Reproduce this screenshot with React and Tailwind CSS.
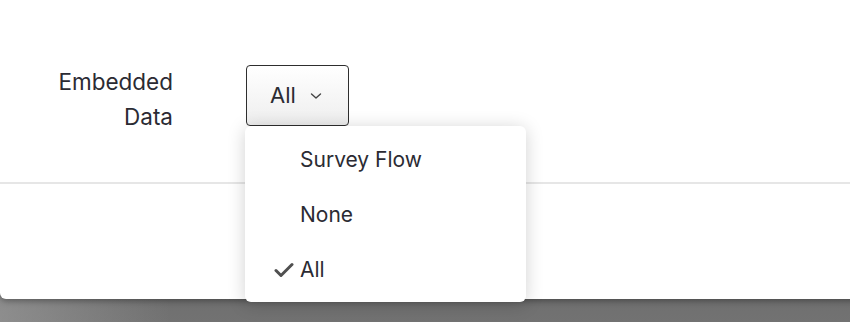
import React from "react";

const font = { fontFamily: "Inter, 'Liberation Sans', sans-serif" };

const Check = () => (
  <svg width="20" height="16" viewBox="0 0 20 16" fill="none">
    <path d="M2 8.5 L7 13.5 L18 2.5" stroke="#505050" strokeWidth="3" strokeLinecap="round" strokeLinejoin="round" />
  </svg>
);

const Chevron = () => (
  <svg width="12" height="8" viewBox="0 0 12 8" fill="none">
    <path d="M1.5 2 L6 6 L10.5 2" stroke="#444" strokeWidth="1.4" strokeLinecap="round" strokeLinejoin="round" />
  </svg>
);

const items = [
  { label: "Survey Flow", checked: false },
  { label: "None", checked: false },
  { label: "All", checked: true },
];

export default function App() {
  return (
    <div
      className="relative w-[850px] h-[322px] overflow-hidden bg-[linear-gradient(to_bottom,#505050,#727272)]"
      style={font}
    >
      <div className="absolute inset-0 bg-[linear-gradient(to_right,rgba(160,160,160,0.6),rgba(160,160,160,0)_20%)]" />
      <div className="relative h-[299px] w-[860px] bg-white rounded-bl-md shadow-[0_2px_6px_rgba(0,0,0,0.35)]">
        <div className="flex items-start pt-[65px] h-[182px]">
          <div className="w-[173px] text-right text-[22.5px] leading-[35px] text-[#2b2b33] -mt-[1px]">
            <div>Embedded</div>
            <div>Data</div>
          </div>
          <button className="ml-[73px] w-[103px] h-[61px] flex items-center gap-[14px] pl-[23px] border border-[#2e2e2e] rounded-[4px] bg-[linear-gradient(to_bottom,#ffffff,#eeeeee)] text-[22px] text-[#2b2b33]">
            <span>All</span>
            <Chevron />
          </button>
        </div>
        <div className="h-[2px] bg-[#e6e6e6]" />
      </div>

      <div className="absolute left-[245px] top-[126px] w-[281px] h-[176px] bg-white rounded-[6px] shadow-[0_2px_18px_rgba(0,0,0,0.18)] flex flex-col pt-[6px]">
        {items.map((it) => (
          <div key={it.label} className="h-[55px] flex items-center text-[21px] text-[#2b2b33]">
            <div className="w-[55px] flex justify-end pr-[6px]">{it.checked && <Check />}</div>
            <span>{it.label}</span>
          </div>
        ))}
      </div>
    </div>
  );
}
